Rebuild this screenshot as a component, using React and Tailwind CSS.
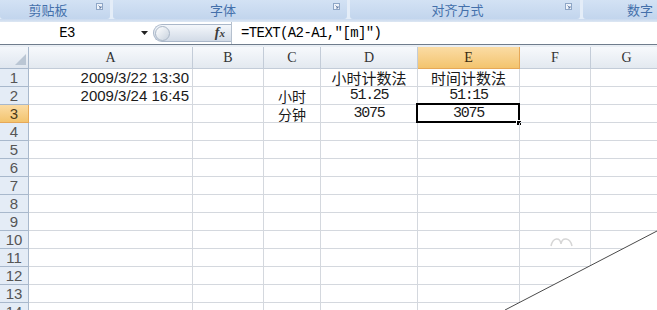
import React from "react";

const COLS = [
  { key: "A", w: "w-[164px]" },
  { key: "B", w: "w-[71px]" },
  { key: "C", w: "w-[57px]" },
  { key: "D", w: "w-[97px]" },
  { key: "E", w: "w-[102px]" },
  { key: "F", w: "w-[71px]" },
  { key: "G", w: "w-[72px]" },
];

const cjk = "font-['Noto_Sans_CJK_SC','Noto_Sans',sans-serif]";
const mono = "font-['Liberation_Mono',monospace] text-[15px] tracking-[-1.3px]";
const sans = "font-['Liberation_Sans',Arial,sans-serif] text-[15px]";

const DATA = {
  1: {
    A: { text: "2009/3/22 13:30", cls: `${sans} justify-end pr-[3px]` },
    D: { text: "小时计数法", cls: `${cjk} text-[15px] justify-center` },
    E: { text: "时间计数法", cls: `${cjk} text-[15px] justify-center` },
  },
  2: {
    A: { text: "2009/3/24 16:45", cls: `${sans} justify-end pr-[3px]` },
    C: { text: "小时", cls: `${cjk} text-[14px] justify-center` },
    D: { text: "51.25", cls: `${mono} justify-center` },
    E: { text: "51:15", cls: `${mono} justify-center` },
  },
  3: {
    C: { text: "分钟", cls: `${cjk} text-[14px] justify-center` },
    D: { text: "3075", cls: `${mono} justify-center` },
    E: { text: "3075", cls: `${mono} justify-center` },
  },
};

function Launcher() {
  return (
    <svg width="7" height="7" viewBox="0 0 7 7" className="shrink-0">
      <rect x="0.5" y="0.5" width="6" height="6" fill="#eef3fa" stroke="#8ea6c6" />
      <path d="M2.5 2.5 L5 5 M3 5 H5 V3" stroke="#55709a" strokeWidth="0.8" fill="none" />
    </svg>
  );
}

function RibbonGroup({ label, width, launcher = true, mr = "mr-[7px]", pl = "" }) {
  return (
    <div
      className={`flex h-[19px] shrink-0 items-center rounded-b-[3px] bg-gradient-to-b from-[#d3e2f4] to-[#c2d5ed] ${width}`}
    >
      <span
        className={`flex-1 ${pl} ${pl ? "text-left" : "text-center"} ${cjk} text-[13px] leading-none text-[#4470ab]`}
      >
        {label}
      </span>
      {launcher && <div className={`${mr} flex items-start self-start pt-[3px]`}><Launcher /></div>}
    </div>
  );
}

function Cell({ row, col }) {
  const d = DATA[row]?.[col.key];
  const selected = row === 3 && col.key === "E";
  return (
    <div
      className={`relative flex h-full shrink-0 items-center border-r border-b border-[#d4d8de] text-[#1a1a1a] ${col.w} ${d ? d.cls : ""}`}
    >
      {d && <span className="whitespace-nowrap leading-none">{d.text}</span>}
      {selected && (
        <>
          <div className="absolute left-[-2px] top-[-2px] h-[20px] w-[104px] border-2 border-black" />
          <div className="absolute bottom-[-4px] right-[-3px] h-[6px] w-[6px] border border-white bg-black" />
        </>
      )}
    </div>
  );
}

export default function App() {
  const rows = Array.from({ length: 14 }, (_, i) => i + 1);
  return (
    <div className="relative h-[310px] w-[657px] overflow-hidden bg-white">
      {/* ribbon group labels */}
      <div className="flex h-[19px] gap-[3px] bg-[#e4edf8]">
        <RibbonGroup label="剪贴板" width="w-[110px]" />
        <RibbonGroup label="字体" width="w-[234px]" />
        <RibbonGroup label="对齐方式" width="w-[230px]" mr="mr-[8px]" />
        <RibbonGroup label="数字" width="w-[120px]" launcher={false} pl="pl-[44px]" />
      </div>
      <div className="h-[3px] bg-gradient-to-b from-[#c9d9ee] to-[#dde7f3]" />

      {/* formula bar */}
      <div className="flex h-[23px] items-center border-b border-[#6f7c8c] bg-white">
        <div className="relative flex h-full w-[150px] shrink-0 items-center">
          <span className="w-[134px] text-center font-['Liberation_Mono',monospace] text-[14px] tracking-[-0.6px] text-black">
            E3
          </span>
          <svg width="7" height="4" viewBox="0 0 7 4" className="ml-[7px]">
            <path d="M0 0 H7 L3.5 4 Z" fill="#222" />
          </svg>
        </div>
        <div className="ml-[3px] flex h-[18px] w-[78px] shrink-0 items-center rounded-l-full border border-r-0 border-[#aab7c9] bg-gradient-to-b from-[#f4f7fb] to-[#d2dbe7]">
          <div className="ml-[1px] h-[15px] w-[15px] rounded-full border border-[#a9b6c6] bg-gradient-to-br from-[#ffffff] to-[#c8d2de]" />
          <span className="ml-auto mr-[6px] font-['Liberation_Serif',serif] text-[14px] font-bold italic leading-none text-[#3b3b3b]">
            f<span className="text-[11px]">x</span>
          </span>
        </div>
        <div className="h-full w-px bg-[#b5c0ce]" />
        <span className="ml-[9px] whitespace-nowrap font-['Liberation_Mono',monospace] text-[14px] tracking-[-0.6px] text-black">
          =TEXT(A2-A1,"[m]")
        </span>
      </div>
      <div className="h-[2px] bg-[#e9eef4]" />

      {/* sheet */}
      <div className="flex flex-col">
        <div className="flex h-[22px]">
          <div className="relative h-full w-[29px] shrink-0 border-r border-b border-[#a8b8cc] bg-gradient-to-b from-[#f4f7fb] to-[#dfe6ef]">
            <svg width="11" height="11" viewBox="0 0 11 11" className="absolute bottom-[3px] right-[2px]">
              <path d="M11 0 V11 H0 Z" fill="#bac6d4" />
            </svg>
          </div>
          {COLS.map((c) => (
            <div
              key={c.key}
              className={`flex h-full shrink-0 items-center justify-center border-r border-b font-['Liberation_Serif',serif] text-[14px] leading-none ${c.w} ${
                c.key === "E"
                  ? "border-[#e6a858] bg-gradient-to-b from-[#fbdca4] to-[#f3c46e] text-[#3a2a10]"
                  : "border-[#c3ccd8] bg-gradient-to-b from-[#f7f9fc] to-[#e3e9f0] text-[#333]"
              }`}
            >
              {c.key}
            </div>
          ))}
        </div>
        {rows.map((r) => (
          <div key={r} className="flex h-[18px] shrink-0">
            <div
              className={`flex h-full w-[29px] shrink-0 items-center justify-center border-r border-b font-['Liberation_Sans',Arial,sans-serif] text-[15px] leading-none ${
                r === 3
                  ? "border-[#e6a858] bg-gradient-to-b from-[#fbdca4] to-[#f3c46e] text-[#4a3a1a]"
                  : "border-[#a8b8cc] bg-[#e4ecf6] text-[#555]"
              }`}
            >
              {r}
            </div>
            {COLS.map((c) => (
              <Cell key={c.key} row={r} col={c} />
            ))}
          </div>
        ))}
      </div>

      {/* page curl at the corner */}
      <svg
        width="657"
        height="310"
        viewBox="0 0 657 310"
        className="pointer-events-none absolute left-0 top-0"
      >
        <path d="M551 246 C553 237 560 237 561 244 C562 237 570 237 572 246" stroke="#d6d6d6" strokeWidth="1.5" fill="none" />
        <polygon points="657,231 505,310 657,310" fill="#ffffff" />
        <line x1="657" y1="231" x2="505" y2="310" stroke="#4a4a4a" strokeWidth="1" />
      </svg>
    </div>
  );
}
